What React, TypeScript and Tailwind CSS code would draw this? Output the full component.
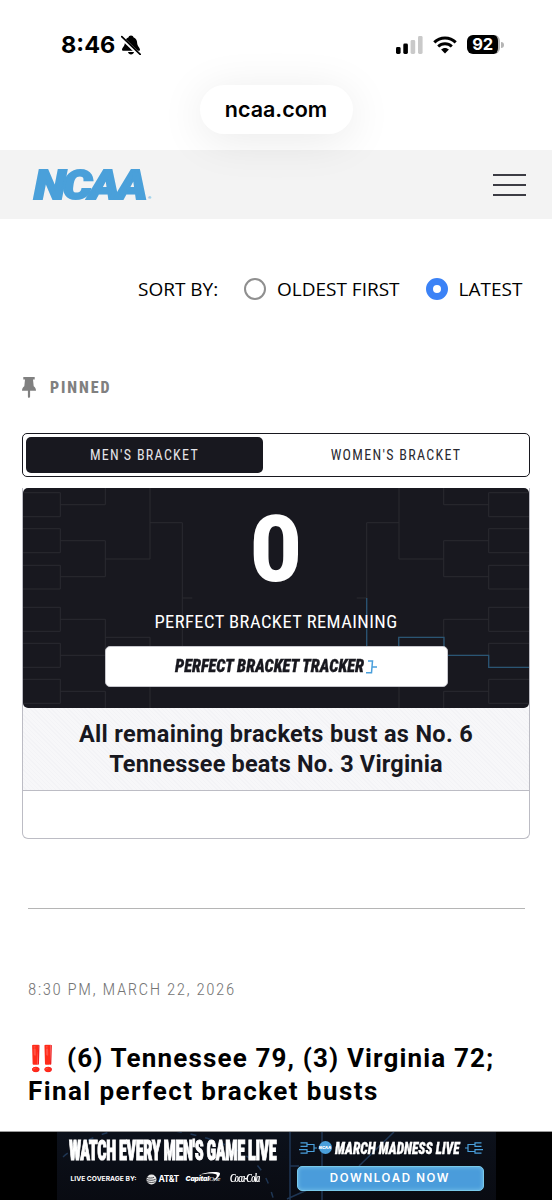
import { FC, useState } from "react";

interface TabInterface {
    id: string;
    label: string;
    width: string;
}

const tabs: TabInterface[] = [
    { id: 'men', label: "Men's bracket", width: 'w-[238px]' },
    { id: 'women', label: "Women's bracket", width: 'w-[264px] pl-[3px]' },
];

const BellOffIcon: FC = () => (
    <svg width="20" height="20" viewBox="0 0 20 20" fill="none">
        <path d="M10 0.5c-1.5 0-2.2.9-2.4 1.7C5 3.1 4 5.2 3.9 7.6 3.8 11.6 1 12.6 1 14.8c0 .6.4.9 1 .9h16c.6 0 1-.3 1-.9 0-2.2-2.8-3.2-2.9-7.2C16 5.2 15 3.1 12.4 2.2 12.2 1.4 11.5.5 10 .5z" fill="#000" />
        <path d="M7 17h6c-.3 1.5-1.5 2.5-3 2.5S7.300 18.500 7 17z" fill="#000" />
        <path d="M-.5 1.500 18.800 20.300" stroke="#fff" strokeWidth="3.600" />
        <path d="M.8 1.600 19.200 19.300" stroke="#000" strokeWidth="1.700" strokeLinecap="round" />
    </svg>
);

const SignalIcon: FC = () => (
    <svg width="27" height="18" viewBox="0 0 27 18">
        <rect x="0" y="11" width="4.600" height="7" rx="1.400" fill="#000" />
        <rect x="7.300" y="7.500" width="4.600" height="10.500" rx="1.400" fill="#000" />
        <rect x="14.600" y="4" width="4.600" height="14" rx="1.400" fill="#c9c9c9" />
        <rect x="22" y="0" width="4.600" height="18" rx="1.400" fill="#c9c9c9" />
    </svg>
);

const WifiIcon: FC = () => (
    <svg width="24" height="18" viewBox="0 0 24 18" fill="none" stroke="#000">
        <path d="M1.300 6.400C7.200.5 16.800.5 22.700 6.400" strokeWidth="3" />
        <path d="M5.200 10.500c3.800-3.700 9.800-3.700 13.600 0" strokeWidth="2.900" />
        <path d="M12 17.600 8.100 13.600c2.200-2.100 5.600-2.100 7.800 0z" fill="#000" stroke="none" />
    </svg>
);

const PinIcon: FC = () => (
    <svg width="14" height="21" viewBox="0 0 14 21" fill="#808080">
        <path d="M1.300 0h11.400v2.400h-1.700l.7 6.800c1.300.8 2.300 2.300 2.300 4.600H8.100v6l-.9 1.200h-.6l-.7-1.200v-6H0c0-2.300 1-3.800 2.300-4.600L3 2.400H1.300z" />
    </svg>
);

const half = "M0 4.700H37.300V28.700H0M0 40.700H37.300V64.700H0M0 77.300H37.300V101H0M0 119.300H37.300V143.300H0M0 155.300H37.300V179.300H0M0 191.300H37.300V215.300H0M37.300 16.700H82.300V0M37.300 52.700H82.300V88.700H37.300M37.300 131.300H82.300V167.300H37.300M37.300 203.300H82.300V220M82.300 71H127V0M82.300 149.300H127V220M127 34.700H159.300V185M159.300 110H169.300";

const BracketLines: FC = () => (
    <svg className="absolute inset-0" width="506" height="220" viewBox="0 0 506 220" fill="none">
        <path d={half} stroke="#2b2b31" />
        <path d={half} stroke="#2b2b31" transform="translate(503 0) scale(-1 1)" />
        <path d="M503 4.700h3M503 28.700h3M503 40.700h3M503 64.700h3M503 77.300h3M503 101h3M503 119.300h3M503 143.300h3M503 155.300h3M503 191.300h3M503 215.300h3" stroke="#2b2b31" />
        <path d="M343.700 110V158M375.700 160V149.300H421V167.300H465.700V179.300H506" stroke="#2a5574" strokeWidth="1.300" />
    </svg>
);

const SmallBracket: FC<{ className?: string }> = (props) => (
    <svg className={props.className} width="18" height="12" viewBox="0 0 18 12" fill="none" stroke="#4a9fdb" strokeWidth="1.200">
        <path d="M1.500 .8H8V4.300H1.500M0 7.700H8V11.200H1.500M8 2.500H15V9.500H8M15 6H18" />
    </svg>
);

const StatusBar: FC = () => (
    <div className="flex h-[85px] items-start justify-between pt-[35px] pr-[48px] pl-[61px]">
        <div className="flex items-center gap-[6px]">
            <span className="font-['Inter',sans-serif] text-[23.500px] leading-[20px] font-bold">8:46</span>
            <BellOffIcon />
        </div>
        <div className="flex items-center gap-[10px]">
            <SignalIcon />
            <WifiIcon />
            <div className="flex items-center gap-px">
                <div className="flex h-[19px] w-[33px] items-center justify-center rounded-[6px] border-r-2 border-[#b5b5b5] bg-black font-['Inter',sans-serif] text-[16.500px] font-bold tracking-[-0.3px] text-white">92</div>
                <div className="h-[6px] w-[3px] rounded-r-full bg-[#b5b5b5]" />
            </div>
        </div>
    </div>
);

const Radio: FC<{ label: string; checked: boolean; onClick: () => void }> = (props) => (
    <div className="flex cursor-pointer items-center gap-[11px]" onClick={props.onClick}>
        {props.checked && (
            <span className="h-[22px] w-[22px] rounded-full border-[7.500px] border-[#3b82f6] bg-white" />
        )}
        {!props.checked && (
            <span className="h-[22px] w-[22px] rounded-full border-2 border-[#8f8f8f] bg-white" />
        )}
        <span>{props.label}</span>
    </div>
);

const AdBanner: FC = () => (
    <div className="mt-auto flex h-[69px] justify-center overflow-hidden border-t border-[#9a9a9a] bg-black">
        <div className="relative flex h-[68px] w-[439px] bg-linear-to-b from-[#0c111b] to-[#090b12] text-white">
            <svg className="absolute inset-0" width="439" height="68" viewBox="0 0 439 68" fill="none" stroke="#1f3654" strokeWidth="1.500">
                <path d="M6 25C30 5 55-4 85-4s75 10 100 25 28 35 34 55" strokeDasharray="6 9" />
                <path d="M233 0V68M265 0V68M233 34H242M337 0 302 34M230 67 250 58" />
            </svg>
            <div className="relative w-[240px] pt-[6px] pl-[12px]">
                <div className="h-[27px] w-[210px]">
                    <span className="inline-block origin-left scale-x-[0.604] font-['Roboto_Condensed',sans-serif] text-[27px] leading-[27px] font-black tracking-[-0.700px] whitespace-nowrap [-webkit-text-stroke:1px_white]">WATCH EVERY MEN'S GAME LIVE</span>
                </div>
                <div className="mt-[8px] flex h-[12px] items-center">
                    <span className="w-[77px] pl-[2px] font-['Inter',sans-serif] text-[6.700px] font-bold whitespace-nowrap">LIVE COVERAGE BY:</span>
                    <svg className="mr-[2px]" width="11" height="11" viewBox="0 0 11 11">
                        <circle cx="5.500" cy="5.500" r="5" fill="#e8e8e8" />
                        <path d="M1 3.300c2 1 5 1 7 0M.5 5.400c3 1.200 6 1.200 9 0M1 7.600c3 1.200 6 1.200 8.500 0" stroke="#0b0e16" strokeWidth=".7" fill="none" />
                    </svg>
                    <span className="w-[27px] font-['Inter',sans-serif] text-[8.500px] font-bold tracking-[-0.400px]">AT&amp;T</span>
                    <span className="relative w-[42px] font-['Inter',sans-serif] text-[6.800px] font-black tracking-[-0.200px] whitespace-nowrap italic">
                        Capital<span className="font-['Liberation_Serif',serif] text-[7px] font-normal">One</span>
                        <svg className="absolute -top-[2px] left-[13px]" width="22" height="10" viewBox="0 0 22 10">
                            <path d="M0 3C8-.5 21-1 21 1.500 21 4 18 7 14 9.500 17 6 19 3.500 17 2.300 14 1 6 1.500 0 3z" fill="#fff" />
                        </svg>
                    </span>
                    <span className="ml-[2px] origin-left scale-x-[0.740] font-['Liberation_Serif',serif] text-[11.500px] font-bold tracking-[-1.200px] whitespace-nowrap italic">Coca-Cola</span>
                </div>
            </div>
            <div className="relative flex w-[187px] flex-col pt-[9px]">
                <div className="flex h-[13px] items-center pl-[2px]">
                    <SmallBracket />
                    <span className="ml-[2px] flex h-[13px] w-[13px] items-center justify-center rounded-full bg-[#4a9fdb] font-['Inter',sans-serif] text-[4px] font-black italic">NCAA</span>
                    <span className="-mt-[5px] ml-[3px] h-[17px] w-[130px]">
                        <span className="inline-block origin-left scale-x-[0.79] font-['Roboto_Condensed',sans-serif] text-[17px] leading-[17px] font-black whitespace-nowrap italic [-webkit-text-stroke:0.300px_white]">MARCH MADNESS LIVE</span>
                    </span>
                    <SmallBracket className="-scale-x-100" />
                </div>
                <button className="mt-[12px] flex h-[25px] w-[187px] items-center justify-center rounded-[5px] border border-[#79c9ea] bg-[#4a9cdb] font-['Inter',sans-serif] text-[11.500px] font-semibold tracking-[1.650px] shadow-[inset_0_0_4px_#79c4e8]">DOWNLOAD NOW</button>
            </div>
        </div>
    </div>
);

export default function App() {
    const [sort, setSort] = useState('latest');
    const [tab, setTab] = useState('men');

    return (
        <div className="flex h-[1200px] w-[552px] flex-col overflow-hidden bg-white font-['Roboto_Condensed','Roboto',sans-serif] text-black">
            <StatusBar />
            <div className="relative z-10 flex h-[65px] shrink-0 items-start justify-center">
                <div className="flex h-[49px] w-[153px] items-center justify-center rounded-full bg-white font-['Inter',sans-serif] text-[21.500px] font-semibold shadow-[0_6px_46px_rgba(0,0,0,0.09)]">ncaa.com</div>
            </div>
            <header className="flex h-[69px] shrink-0 items-center justify-between bg-[#f3f3f3] pr-[26px] pl-[34px]">
                <div className="flex items-end pt-[2px] font-['Roboto',sans-serif] font-black text-[#4aa0da] italic">
                    <span className="w-[112px]">
                        <span className="inline-block origin-left scale-x-[1.130] text-[41px] leading-[40px] tracking-[-2.600px] [-webkit-text-stroke:2px_#4aa0da]">NCAA</span>
                    </span>
                    <span className="mb-[6px] ml-[2px] text-[4px] leading-[4px] not-italic">®</span>
                </div>
                <div className="flex flex-col gap-[8px]">
                    <span className="h-[2px] w-[33px] bg-[#3c3c44]" />
                    <span className="h-[2px] w-[33px] bg-[#3c3c44]" />
                    <span className="h-[2px] w-[33px] bg-[#3c3c44]" />
                </div>
            </header>

            <main className="px-[22px]">
                <div className="flex h-[140px] items-center pl-[116px] font-['Open_Sans',sans-serif] text-[19px]">
                    <span className="w-[106px]">SORT BY:</span>
                    <div className="flex gap-[26px]">
                        <Radio label="OLDEST FIRST" checked={sort === 'oldest'} onClick={() => setSort('oldest')} />
                        <Radio label="LATEST" checked={sort === 'latest'} onClick={() => setSort('latest')} />
                    </div>
                </div>

                <div className="mt-[17px] flex h-[23px] items-center gap-[14px] text-[16px] font-extrabold tracking-[1.900px] text-[#808080]">
                    <PinIcon />
                    <span>PINNED</span>
                </div>

                <div className="mt-[34px] flex h-[44px] w-[508px] rounded-[5px] border-[1.500px] border-[#18181f] p-[3px]">
                    {tabs.map((item) => (
                        <button
                            key={item.id}
                            onClick={() => setTab(item.id)}
                            className={`${item.width} cursor-pointer rounded-[5px] text-[14px] tracking-[1.300px] uppercase ${tab === item.id ? 'bg-[#18181f] text-[#e4e4e8]' : 'text-[#2a2a31]'}`}
                        >
                            {item.label}
                        </button>
                    ))}
                </div>

                <section className="mt-[11px] h-[351px] w-[508px] rounded-b-[6px] border border-t-0 border-[#bcbcc4]">
                    <div className="relative flex h-[220px] flex-col items-center overflow-hidden rounded-[5px] bg-[#18181f] text-white">
                        <BracketLines />
                        <span className="relative mt-[13px] scale-x-[0.960] font-['Roboto',sans-serif] text-[93px] leading-[97px] font-black">0</span>
                        <span className="relative mt-[13px] text-[18.500px] leading-[22px] tracking-[0.450px]">PERFECT BRACKET REMAINING</span>
                        <button className="relative mt-[13px] flex h-[41px] w-[343px] shrink-0 cursor-pointer items-center rounded-[5px] border border-[#c6c6cc] bg-white pl-[69px] text-[#18181f]">
                            <span className="w-[191px] text-left">
                                <span className="inline-block origin-left scale-x-[0.885] text-[18.500px] font-black whitespace-nowrap italic [-webkit-text-stroke:0.300px_#18181f]">PERFECT BRACKET TRACKER</span>
                            </span>
                            <svg width="11" height="14" viewBox="0 0 11 14" fill="none" stroke="#4a9fdb" strokeWidth="1.500">
                                <path d="M2 1H6.500L5.500 12.800H0M6 7H11" />
                            </svg>
                        </button>
                    </div>
                    <h3 className="flex h-[83px] flex-col border-b border-[#bcbcc4] bg-[repeating-linear-gradient(45deg,#f7f7f9_0,#f7f7f9_2px,#f3f3f6_2px,#f3f3f6_3px)] pt-[11px] text-center font-['Roboto',sans-serif] text-[23.500px] leading-[30px] font-bold text-[#18181f]">
                        <span className="tracking-[0.340px]">All remaining brackets bust as No. 6</span>
                        <span className="tracking-[0.180px]">Tennessee beats No. 3 Virginia</span>
                    </h3>
                </section>

                <hr className="mx-[6px] mt-[69px] w-[497px] border-[#b5b5b5]" />

                <article className="mt-[70px] pl-[6px]">
                    <time className="block text-[17px] leading-[20px] font-light tracking-[1.500px] text-[#757575]">8:30 PM, MARCH 22, 2026</time>
                    <h2 className="mt-[43px] font-['Roboto',sans-serif] text-[26px] leading-[33px] font-bold tracking-[1.150px]">
                        <span className="mr-[4px] -ml-[7px] inline-block w-[42px] text-[25px] tracking-normal">
                            <span className="inline-block w-[30px] origin-left scale-x-[1.350] font-['Noto_Color_Emoji'] brightness-90 saturate-150">‼️</span>
                        </span>
                        (6) Tennessee 79, (3) Virginia 72;
                        <br />
                        <span className="tracking-[1.430px]">Final perfect bracket busts</span>
                    </h2>
                </article>
            </main>

            <AdBanner />
        </div>
    );
}
